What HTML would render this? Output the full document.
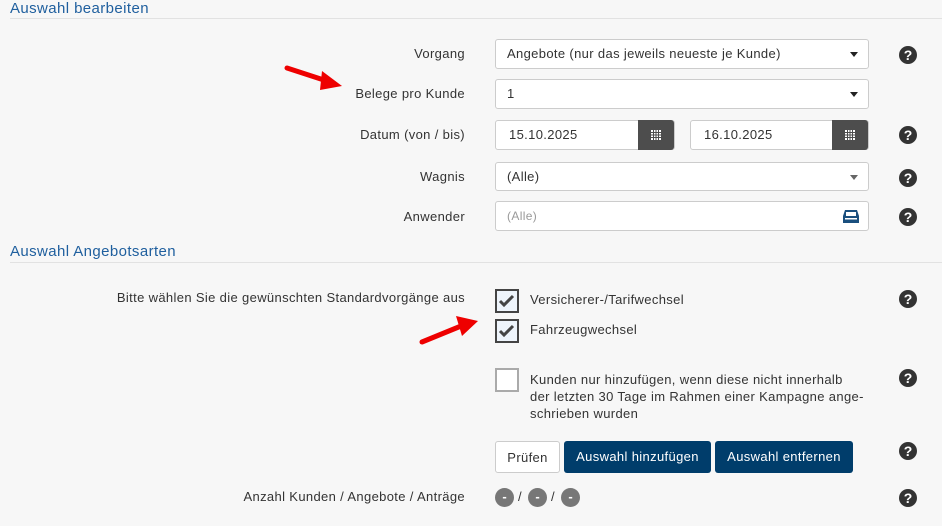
<!DOCTYPE html>
<html><head><meta charset="utf-8"><style>
body{margin:0;width:942px;height:526px;background:#f7f7f7;font-family:"Liberation Sans",sans-serif;font-size:13px;color:#333;position:relative;overflow:hidden;letter-spacing:0.35px}
.a{position:absolute}
.h{color:#1f5f9e;font-size:15px;left:10px;letter-spacing:0.4px}
.line{left:10px;right:0;height:1px;background:#e2e2e2}
.lbl{right:477px;text-align:right;white-space:nowrap}
.inp{background:#fff;border:1px solid #ccc;border-radius:3px;box-sizing:border-box;height:30px;line-height:28px;padding-left:11px}
.caret{position:absolute;right:10px;top:12px;border-left:4px solid transparent;border-right:4px solid transparent;border-top:5px solid #222}
.cal{position:absolute;right:0;top:-1px;width:36px;height:30px;background:#4d4d4d;border-radius:0 3px 3px 0}
.q{width:18px;height:18px;border-radius:50%;background:#333;color:#fff;font-weight:bold;font-size:14px;line-height:18px;text-align:center;left:899px;letter-spacing:0}
.cb{width:24px;height:24px;border:2px solid #444;box-sizing:border-box;background:#eef4fb;left:495px}
.btn{height:32px;line-height:32px;border-radius:3px;text-align:center;box-sizing:border-box}
.bd{width:19px;height:19px;border-radius:50%;background:#777;color:#fff;text-align:center;line-height:18px;top:488px;font-weight:bold;letter-spacing:0}
</style></head><body>
<div class="a h" style="top:0px">Auswahl bearbeiten</div>
<div class="a line" style="top:18px"></div>

<div class="a lbl" style="top:46px">Vorgang</div>
<div class="a inp" style="left:495px;top:39px;width:374px">Angebote (nur das jeweils neueste je Kunde)<span class="caret"></span></div>
<div class="a q" style="top:46px">?</div>

<div class="a lbl" style="top:86px">Belege pro Kunde</div>
<div class="a inp" style="left:495px;top:79px;width:374px">1<span class="caret"></span></div>

<div class="a lbl" style="top:127px">Datum (von / bis)</div>
<div class="a inp" style="left:495px;top:120px;width:180px;padding-left:13px">15.10.2025<span class="cal"><svg width="36" height="30"><g fill="#fff"><rect x="13" y="10" width="10" height="10"/></g><g stroke="#4d4d4d" stroke-width="1"><path d="M15.5 10v10M18 10v10M20.5 10v10M13 12.5h10M13 15h10M13 17.5h10"/></g></svg></span></div>
<div class="a inp" style="left:690px;top:120px;width:179px;padding-left:13px">16.10.2025<span class="cal"><svg width="36" height="30"><g fill="#fff"><rect x="13" y="10" width="10" height="10"/></g><g stroke="#4d4d4d" stroke-width="1"><path d="M15.5 10v10M18 10v10M20.5 10v10M13 12.5h10M13 15h10M13 17.5h10"/></g></svg></span></div>
<div class="a q" style="top:126px">?</div>

<div class="a lbl" style="top:169px">Wagnis</div>
<div class="a inp" style="left:495px;top:162px;width:374px;height:29px;line-height:27px">(Alle)<span class="caret" style="border-top-color:#666"></span></div>
<div class="a q" style="top:169px">?</div>

<div class="a lbl" style="top:209px">Anwender</div>
<div class="a inp" style="left:495px;top:201px;width:374px;color:#999;font-size:12px">(Alle)<svg style="position:absolute;right:9px;top:7px" width="16" height="15"><path d="M2 1h12l2 6v7H0V7z" fill="#1a4f7e"/><rect x="3" y="3" width="10" height="4" fill="#fff"/><rect x="2" y="9" width="12" height="1.5" fill="#fff"/></svg></div>
<div class="a q" style="top:208px">?</div>

<div class="a h" style="top:243px">Auswahl Angebotsarten</div>
<div class="a line" style="top:262px"></div>

<div class="a lbl" style="top:290px">Bitte wählen Sie die gewünschten Standardvorgänge aus</div>
<div class="a cb" style="top:289px"><svg width="20" height="20"><path d="M3 10l4 4 9-9" stroke="#444" stroke-width="3" fill="none"/></svg></div>
<div class="a" style="left:530px;top:292px">Versicherer-/Tarifwechsel</div>
<div class="a q" style="top:290px">?</div>
<div class="a cb" style="top:319px"><svg width="20" height="20"><path d="M3 10l4 4 9-9" stroke="#444" stroke-width="3" fill="none"/></svg></div>
<div class="a" style="left:530px;top:322px">Fahrzeugwechsel</div>

<div class="a cb" style="top:368px;border-color:#aaa;background:#fff"></div>
<div class="a" style="left:530px;top:371px;line-height:17px">Kunden nur hinzufügen, wenn diese nicht innerhalb<br>der letzten 30 Tage im Rahmen einer Kampagne ange-<br>schrieben wurden</div>
<div class="a q" style="top:369px">?</div>

<div class="a btn" style="left:495px;top:441px;width:65px;background:#fff;border:1px solid #ccc">Prüfen</div>
<div class="a btn" style="left:564px;top:441px;width:147px;background:#003d6b;color:#fff">Auswahl hinzufügen</div>
<div class="a btn" style="left:715px;top:441px;width:138px;background:#003d6b;color:#fff">Auswahl entfernen</div>
<div class="a q" style="top:442px">?</div>

<div class="a lbl" style="top:489px">Anzahl Kunden / Angebote / Anträge</div>
<div class="a bd" style="left:495px">-</div><div class="a" style="left:518px;top:489px">/</div>
<div class="a bd" style="left:528px">-</div><div class="a" style="left:551px;top:489px">/</div>
<div class="a bd" style="left:561px">-</div>
<div class="a q" style="top:489px">?</div>

<svg class="a" style="left:0;top:0" width="942" height="526">
<g stroke="#e00" stroke-width="5" stroke-linecap="round" fill="none">
<path d="M287 68L330 82"/>
<path d="M422 342L466 324"/>
</g>
<g fill="#e00">
<path d="M322 71L342 86L320 90Z"/>
<path d="M456 316L478 321L462 336Z"/>
</g></svg>
</body></html>
